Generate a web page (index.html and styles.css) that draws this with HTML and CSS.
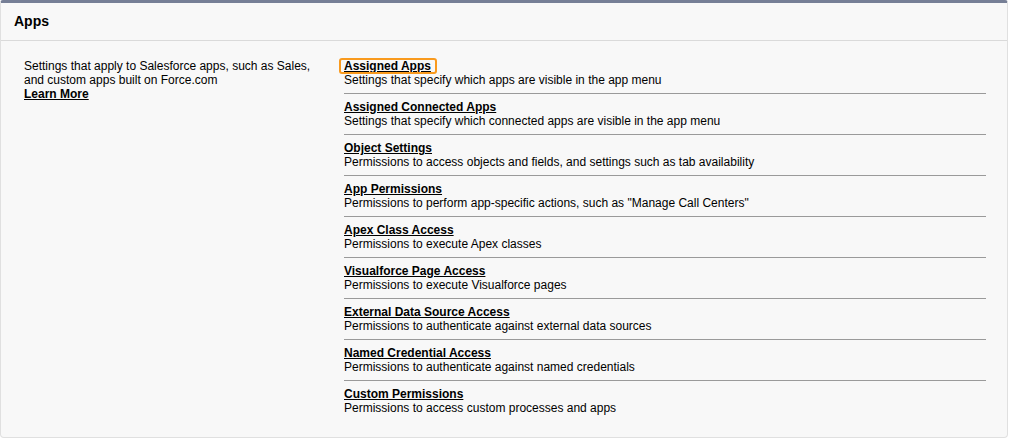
FILE: index.html
```html
<!DOCTYPE html>
<html>
<head>
<meta charset="utf-8">
<link rel="stylesheet" href="styles.css">
</head>
<body>
<div class="panel">
  <div class="panel-header"><h2>Apps</h2></div>
  <div class="panel-body">
    <div class="intro">
      Settings that apply to Salesforce apps, such as Sales, and custom apps built on Force.com<br>
      <a class="learn" href="#">Learn More</a>
    </div>
    <ul class="items">
      <li class="item"><a class="item-title focused" href="#">Assigned Apps</a><div class="item-desc">Settings that specify which apps are visible in the app menu</div></li>
      <li class="item"><a class="item-title" href="#">Assigned Connected Apps</a><div class="item-desc">Settings that specify which connected apps are visible in the app menu</div></li>
      <li class="item"><a class="item-title" href="#">Object Settings</a><div class="item-desc">Permissions to access objects and fields, and settings such as tab availability</div></li>
      <li class="item"><a class="item-title" href="#">App Permissions</a><div class="item-desc">Permissions to perform app-specific actions, such as "Manage Call Centers"</div></li>
      <li class="item"><a class="item-title" href="#">Apex Class Access</a><div class="item-desc">Permissions to execute Apex classes</div></li>
      <li class="item"><a class="item-title" href="#">Visualforce Page Access</a><div class="item-desc">Permissions to execute Visualforce pages</div></li>
      <li class="item"><a class="item-title" href="#">External Data Source Access</a><div class="item-desc">Permissions to authenticate against external data sources</div></li>
      <li class="item"><a class="item-title" href="#">Named Credential Access</a><div class="item-desc">Permissions to authenticate against named credentials</div></li>
      <li class="item"><a class="item-title" href="#">Custom Permissions</a><div class="item-desc">Permissions to access custom processes and apps</div></li>
    </ul>
  </div>
</div>
</body>
</html>
```

FILE: styles.css
```css
html, body {
  margin: 0;
  padding: 0;
  background: #ffffff;
}
body {
  font-family: Arial, "Liberation Sans", Helvetica, sans-serif;
  font-size: 12px;
  color: #000;
}
.panel {
  width: 1006px;
  height: 434px;
  background: #f8f8f8;
  border: 1px solid #e0e0e0;
  border-top: 3px solid #767f96;
  border-radius: 3px 3px 4px 4px;
}
.panel-header {
  height: 37px;
  display: flex;
  align-items: center;
  padding-left: 13px;
  border-bottom: 1px solid #dadada;
}
.panel-header h2 {
  margin: 0;
  font-size: 14px;
  font-weight: bold;
  line-height: 17px;
}
.panel-body {
  display: grid;
  grid-template-columns: 296px 642px;
  column-gap: 24px;
  padding: 17px 0 0 23px;
}
.intro {
  line-height: 14px;
  padding-top: 1px;
}
.learn {
  color: #000;
  font-weight: bold;
  text-decoration: underline;
}
.items {
  list-style: none;
  margin: 0;
  padding: 0;
}
.item {
  line-height: 14px;
  padding: 6px 0 6px;
  border-bottom: 1px solid #9a9a9a;
}
.item:first-child {
  padding-top: 1px;
}
.item:last-child {
  border-bottom: none;
}
.item-title {
  color: #000;
  font-weight: bold;
  text-decoration: underline;
}
.focused {
  padding: 0 5px 0 4px;
  margin: 0 -5px 0 -4px;
  outline: 2px solid #f99a1e;
  outline-offset: -1px;
  border-radius: 2px;
}
.item-desc {
  color: #000;
}
```
